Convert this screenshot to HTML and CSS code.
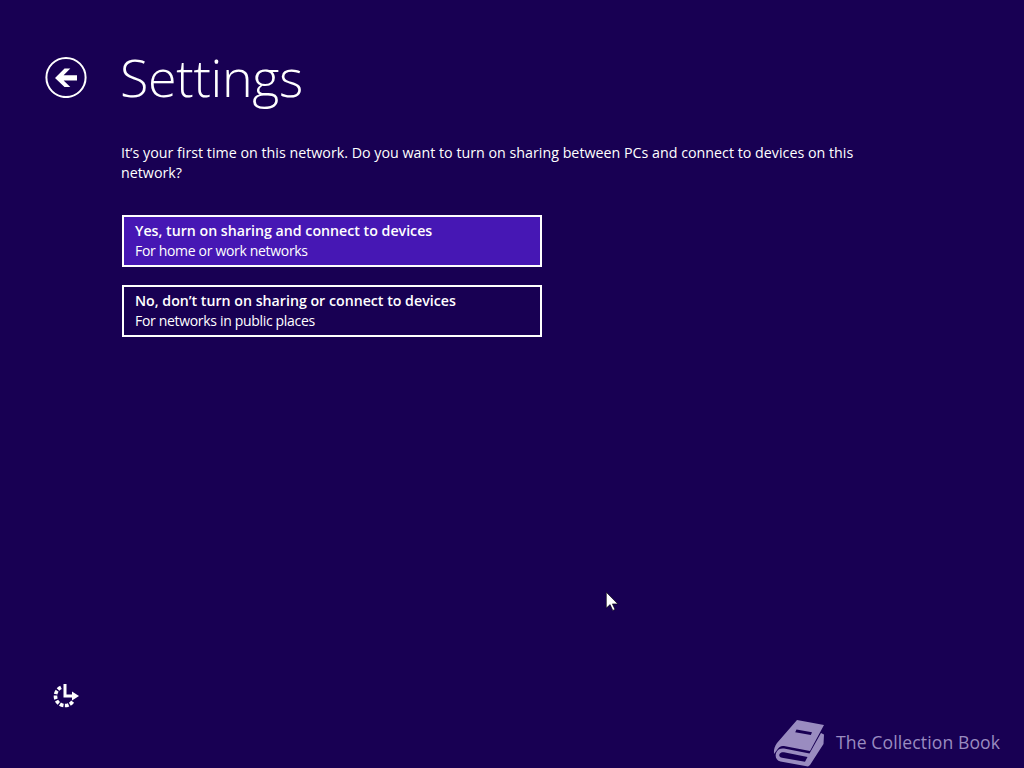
FILE: index.html
```html
<!DOCTYPE html>
<html lang="en">
<head>
<meta charset="utf-8">
<title>Settings</title>
<link rel="stylesheet" href="styles.css">
</head>
<body>
<div class="page">
  <header class="header">
    <svg class="back" width="42" height="42" viewBox="0 0 42 42" aria-label="Back">
      <circle cx="21" cy="21.500" r="19.600" fill="none" stroke="#fff" stroke-width="2"/>
      <path d="M10 22 19.500 12.500h5.800L18.600 19.200H32v5.200H18.600l6.700 6.700h-5.800z" fill="#fff"/>
    </svg>
    <h1 class="title">Settings</h1>
  </header>
  <main class="content">
    <p class="question">It’s your first time on this network. Do you want to turn on sharing between PCs and connect to devices on this network?</p>
    <div class="options">
      <button class="option option-active">
        <span class="option-title">Yes, turn on sharing and connect to devices</span>
        <span class="option-sub">For home or work networks</span>
      </button>
      <button class="option">
        <span class="option-title">No, don’t turn on sharing or connect to devices</span>
        <span class="option-sub">For networks in public places</span>
      </button>
    </div>
  </main>
  <footer class="footer">
    <svg class="ease" width="27" height="24" viewBox="0 0 27 24" aria-label="Ease of access">
      <path d="M12 0v12h7" fill="none" stroke="#fff" stroke-width="3"/>
      <path d="M19 7.500 26 12 19 16.500z" fill="#fff"/>
      <path d="M8 3.400A9.500 9.500 0 1 0 20.200 16.750" fill="none" stroke="#fff" stroke-width="3.600" stroke-dasharray="3.700 1.400"/>
    </svg>
  </footer>
</div>
<svg class="cursor" width="13" height="20" viewBox="0 0 13 20" aria-hidden="true">
  <path d="M.3.300v15.800l3.800-3.500 2.700 5.800 2.200-1-2.600-5.500h5.400z" fill="#fff" stroke="#000" stroke-width=".6"/>
</svg>
<div class="watermark">
  <svg class="book" width="52" height="48" viewBox="0 0 52 48" aria-hidden="true">
    <path d="M24 1 51 6 37 32 11 27C8 26.500 6 28 4 31L1 35C.5 30 2 27 4 24Z" fill="#9a8cc0"/>
    <path d="M3.500 33C5 30 8 29 11 29.500L36.500 34.500 48 14 51 15.500 50.500 25 37 46 35 47.500 7.500 42.500C3 41.500 1.500 37 3.500 33Z" fill="#9a8cc0"/>
    <path d="M6.500 35C7.500 33.500 9 33 11 33.300L34.500 38 32 42.800 9 38.800C6.500 38.300 5.700 36.500 6.500 35Z" fill="#180053"/>
    <path d="M23.500 10.500 39 13.300 37.800 16 22.200 13.200Z" fill="#180053"/>
  </svg>
  <span class="brand">The Collection Book</span>
</div>
</body>
</html>
```
FILE: styles.css
```css
* { box-sizing: border-box; }
html, body { margin: 0; height: 100%; }
body {
  background: #180053;
  color: #fff;
  font-family: "Open Sans", "Noto Sans", sans-serif;
  overflow: hidden;
}
.page {
  height: 768px;
  display: flex;
  flex-direction: column;
  padding: 0 0 60px 45px;
}
.header {
  display: flex;
  align-items: center;
  gap: 33px;
  height: 100px;
  padding-top: 54px;
}
.back { flex: none; }
.title {
  margin: 0;
  font-size: 52px;
  font-weight: 300;
  line-height: 48px;
  letter-spacing: -.3px;
}
.content {
  flex: 1;
  padding: 43px 0 0 76px;
}
.question {
  margin: 0;
  width: 760px;
  font-size: 14.27px;
  line-height: 20px;
}
.options {
  display: flex;
  flex-direction: column;
  gap: 18px;
  margin: 32px 0 0 1px;
}
.option {
  display: flex;
  flex-direction: column;
  width: 420px;
  height: 52px;
  padding: 4px 11px;
  background: transparent;
  border: 2px solid #fff;
  color: #fff;
  font: inherit;
  text-align: left;
  font-size: 14.2px;
  line-height: 20px;
}
.option-active { background: #4617b4; }
.option-title { font-weight: 600; }
.option-sub { font-weight: 400; font-size: 14px; letter-spacing: -.32px; }
.footer { padding-left: 8px; }
.ease { display: block; }
.cursor { position: absolute; left: 606px; top: 592px; }
.watermark {
  position: absolute;
  left: 773px;
  top: 719px;
  display: flex;
  align-items: center;
  gap: 11px;
}
.book { display: block; }
.brand { position: relative; top: -1px; color: #9a8cc0; font-size: 17.6px; letter-spacing: .1px; }
```
